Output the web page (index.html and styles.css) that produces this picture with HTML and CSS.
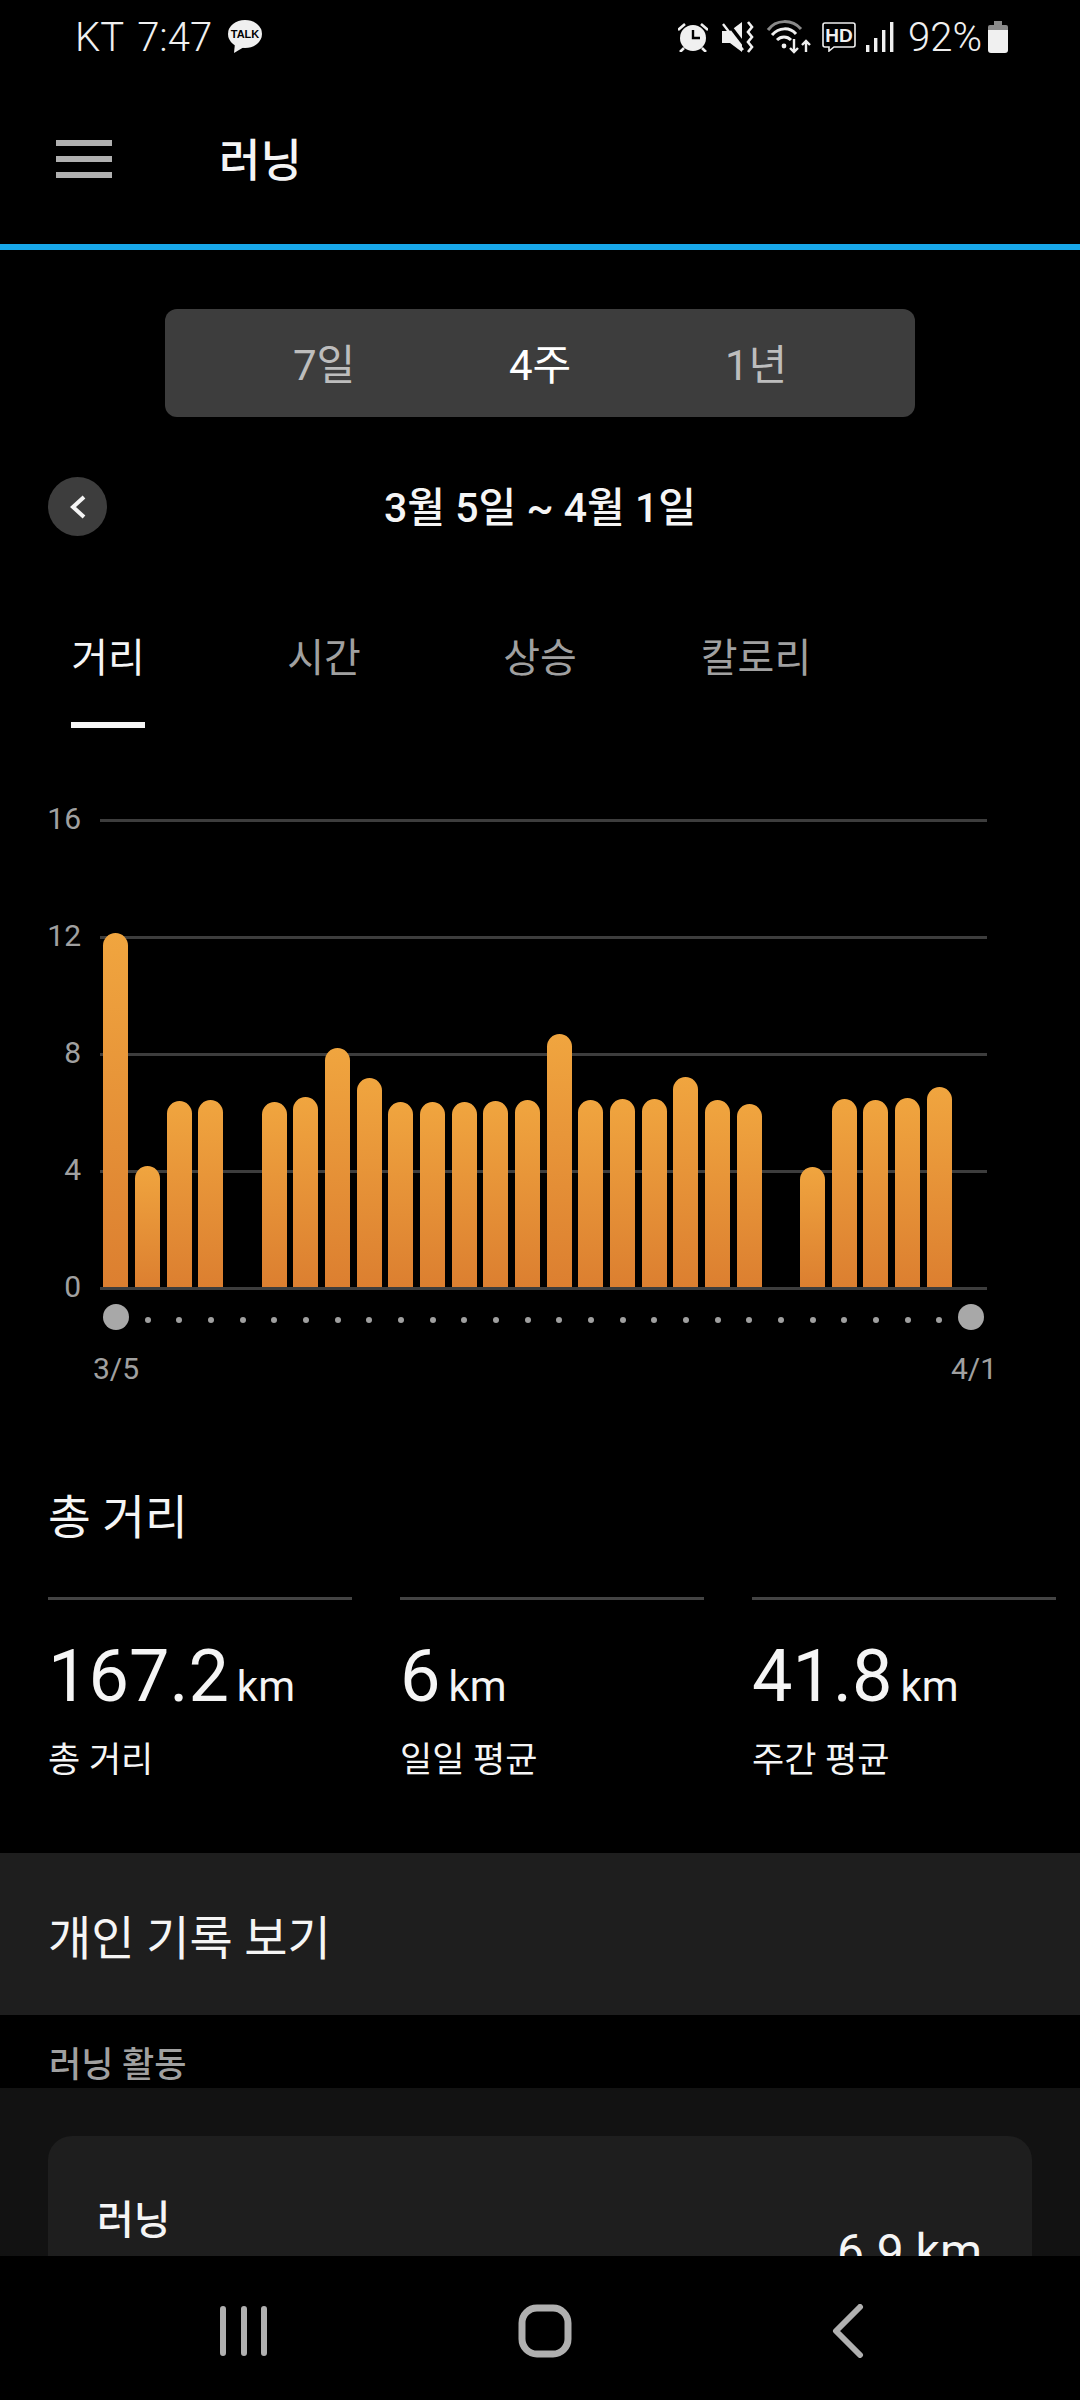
FILE: index.html
```html
<!DOCTYPE html>
<html lang="ko">
<head>
    <meta charset="utf-8">
    <title>러닝</title>
    <link rel="stylesheet" href="styles.css">
</head>
<body>
    <div class="status">
        <div class="status-left">
            <span class="carrier">KT</span>
            <span>7:47</span>
            <svg class="talk" width="34" height="34" viewBox="0 0 34 34">
                <ellipse cx="17" cy="14" rx="17" ry="14" fill="#f0f0f0"/>
                <path d="M7 23 L6 33 L16 27 Z" fill="#f0f0f0"/>
                <text x="17" y="18" text-anchor="middle" class="talk-text">TALK</text>
            </svg>
        </div>
        <div class="status-right">
            <svg width="30" height="30" viewBox="0 0 30 30">
                <circle cx="15" cy="16" r="13" fill="#f0f0f0"/>
                <path d="M15 8 V16 H22" fill="none" stroke="#000" stroke-width="2.4"/>
                <path d="M0 8 L7 2 M30 8 L23 2" stroke="#f0f0f0" stroke-width="2.6"/>
                <path d="M2 30 L6 26 M28 30 L24 26" stroke="#f0f0f0" stroke-width="2.6"/>
            </svg>
            <svg class="ml-14" width="32" height="32" viewBox="0 0 32 32">
                <path d="M0 10 H8 L20 1 V31 L8 22 H0 Z" fill="#f0f0f0"/>
                <path d="M4 0 L24 26" stroke="#000" stroke-width="3.6"/>
                <path d="M1 3 L21 29" stroke="#f0f0f0" stroke-width="2.4"/>
                <path d="M26 1 L30 6 L26 11 L30 16 L26 21 L30 26 L26 31" fill="none" stroke="#f0f0f0" stroke-width="2.6"/>
            </svg>
            <svg class="ml-12" width="46" height="34" viewBox="0 0 46 34">
                <path d="M2 10 C10 -1 26 -1 35 9" fill="none" stroke="#8a8a8a" stroke-width="3"/>
                <path d="M6 15 C13 7 24 7 30 14" fill="none" stroke="#f0f0f0" stroke-width="3"/>
                <path d="M11 20 C15 16 21 16 25 20" fill="none" stroke="#f0f0f0" stroke-width="3"/>
                <circle cx="18" cy="26" r="2.4" fill="#f0f0f0"/>
                <path d="M28 19 V32 M24 28 L28 32 L32 28" fill="none" stroke="#f0f0f0" stroke-width="2.4"/>
                <path d="M40 32 V21 M36 25 L40 21 L44 25" fill="none" stroke="#f0f0f0" stroke-width="2.4"/>
            </svg>
            <svg class="ml-10" width="34" height="30" viewBox="0 0 34 30">
                <path d="M3 1 H31 Q33 1 33 3 V23 Q33 25 31 25 H12 L7 29 V25 H3 Q1 25 1 23 V3 Q1 1 3 1 Z" fill="none" stroke="#f0f0f0" stroke-width="1.6"/>
                <text x="17" y="20" text-anchor="middle" class="hd-text">HD</text>
            </svg>
            <svg class="ml-10" width="28" height="30" viewBox="0 0 28 30">
                <rect x="0" y="23" width="3.4" height="7" fill="#f0f0f0"/>
                <rect x="8" y="16" width="3.4" height="14" fill="#f0f0f0"/>
                <rect x="16" y="8" width="3.4" height="22" fill="#f0f0f0"/>
                <rect x="24" y="0" width="3.4" height="30" fill="#f0f0f0"/>
            </svg>
            <span class="battery-text">92%</span>
            <svg class="ml-6" width="20" height="32" viewBox="0 0 20 32">
                <path d="M6 0 H14 V4 H6 Z" fill="#8a8a8a"/>
                <path d="M2 4 H18 Q20 4 20 6 V9 H0 V6 Q0 4 2 4 Z" fill="#8a8a8a"/>
                <path d="M0 9 H20 V29 Q20 32 17 32 H3 Q0 32 0 29 Z" fill="#f0f0f0"/>
            </svg>
        </div>
    </div>

    <div class="header">
        <div class="burger"><i></i><i></i><i></i></div>
        <h1>러닝</h1>
    </div>

    <main class="content">
        <div class="segment">
            <span>7일</span>
            <span class="on">4주</span>
            <span>1년</span>
        </div>

        <div class="date-row">
            <div class="round-btn">
                <svg width="18" height="24" viewBox="0 0 18 24">
                    <path d="M15 2 L4 12 L15 22" fill="none" stroke="#f5f5f5" stroke-width="4"/>
                </svg>
            </div>
            <div class="date">3월 5일 ~ 4월 1일</div>
        </div>

        <div class="tabs">
            <div class="tab on"><span>거리</span><i></i></div>
            <div class="tab"><span>시간</span><i></i></div>
            <div class="tab"><span>상승</span><i></i></div>
            <div class="tab"><span>칼로리</span><i></i></div>
        </div>

        <div class="chart">
            <div class="grid-row"><span>16</span><i></i></div>
            <div class="grid-row"><span>12</span><i></i></div>
            <div class="grid-row"><span>8</span><i></i></div>
            <div class="grid-row"><span>4</span><i></i></div>
            <div class="grid-row"><span>0</span><i></i></div>
            <div class="bars">
                <div class="slot"><b style="height:354px"></b></div>
                <div class="slot"><b style="height:121px"></b></div>
                <div class="slot"><b style="height:186px"></b></div>
                <div class="slot"><b style="height:187px"></b></div>
                <div class="slot"></div>
                <div class="slot"><b style="height:185px"></b></div>
                <div class="slot"><b style="height:190px"></b></div>
                <div class="slot"><b style="height:239px"></b></div>
                <div class="slot"><b style="height:209px"></b></div>
                <div class="slot"><b style="height:185px"></b></div>
                <div class="slot"><b style="height:185px"></b></div>
                <div class="slot"><b style="height:185px"></b></div>
                <div class="slot"><b style="height:186px"></b></div>
                <div class="slot"><b style="height:187px"></b></div>
                <div class="slot"><b style="height:253px"></b></div>
                <div class="slot"><b style="height:187px"></b></div>
                <div class="slot"><b style="height:188px"></b></div>
                <div class="slot"><b style="height:188px"></b></div>
                <div class="slot"><b style="height:210px"></b></div>
                <div class="slot"><b style="height:187px"></b></div>
                <div class="slot"><b style="height:183px"></b></div>
                <div class="slot"></div>
                <div class="slot"><b style="height:120px"></b></div>
                <div class="slot"><b style="height:188px"></b></div>
                <div class="slot"><b style="height:187px"></b></div>
                <div class="slot"><b style="height:189px"></b></div>
                <div class="slot"><b style="height:200px"></b></div>
                <div class="slot"></div>
            </div>
        </div>

        <div class="dots">
            <div class="slot"><i class="big"></i></div>
            <div class="slot"><i></i></div><div class="slot"><i></i></div><div class="slot"><i></i></div>
            <div class="slot"><i></i></div><div class="slot"><i></i></div><div class="slot"><i></i></div>
            <div class="slot"><i></i></div><div class="slot"><i></i></div><div class="slot"><i></i></div>
            <div class="slot"><i></i></div><div class="slot"><i></i></div><div class="slot"><i></i></div>
            <div class="slot"><i></i></div><div class="slot"><i></i></div><div class="slot"><i></i></div>
            <div class="slot"><i></i></div><div class="slot"><i></i></div><div class="slot"><i></i></div>
            <div class="slot"><i></i></div><div class="slot"><i></i></div><div class="slot"><i></i></div>
            <div class="slot"><i></i></div><div class="slot"><i></i></div><div class="slot"><i></i></div>
            <div class="slot"><i></i></div><div class="slot"><i></i></div>
            <div class="slot"><i class="big"></i></div>
        </div>

        <div class="range">
            <span>3/5</span>
            <span>4/1</span>
        </div>

        <h2 class="total-title">총 거리</h2>

        <div class="stats">
            <div class="stat">
                <div class="num">167.2<small>km</small></div>
                <div class="cap">총 거리</div>
            </div>
            <div class="stat">
                <div class="num">6<small>km</small></div>
                <div class="cap">일일 평균</div>
            </div>
            <div class="stat">
                <div class="num">41.8<small>km</small></div>
                <div class="cap">주간 평균</div>
            </div>
        </div>

        <div class="records">개인 기록 보기</div>

        <div class="section-label">러닝 활동</div>

        <div class="activities">
            <div class="card">
                <div class="card-title">러닝</div>
                <div class="card-value">6.9 km</div>
            </div>
        </div>
    </main>

    <div class="navbar">
        <div class="nav-cell nav-recent">
            <svg width="48" height="50" viewBox="0 0 48 50">
                <path d="M3 3 V47 M24 3 V47 M44 3 V47" stroke="#b0b0b0" stroke-width="6" stroke-linecap="round"/>
            </svg>
        </div>
        <div class="nav-cell">
            <svg width="54" height="54" viewBox="0 0 54 54">
                <rect x="4" y="4" width="46" height="46" rx="15" fill="none" stroke="#b0b0b0" stroke-width="7"/>
            </svg>
        </div>
        <div class="nav-cell">
            <svg width="32" height="54" viewBox="0 0 32 54">
                <path d="M28 3 L4 27 L28 51" fill="none" stroke="#b0b0b0" stroke-width="6" stroke-linecap="round" stroke-linejoin="round"/>
            </svg>
        </div>
    </div>
</body>
</html>
```

FILE: styles.css
```css
* {
    box-sizing: border-box;
}
html, body {
    margin: 0;
    padding: 0;
}
body {
    width: 1080px;
    height: 2400px;
    display: flex;
    flex-direction: column;
    overflow: hidden;
    background: #000;
    color: #f5f5f5;
    font-family: Roboto, "Noto Sans CJK KR", sans-serif;
}
h1, h2 {
    margin: 0;
    font-weight: 400;
}
i, b {
    display: block;
}

/* status bar */
.status {
    height: 80px;
    flex: none;
    display: flex;
    justify-content: space-between;
    align-items: center;
    padding: 0 72px 6px 75px;
    font-size: 40px;
    font-weight: 300;
    color: #f0f0f0;
}
.status-left, .status-right {
    display: flex;
    align-items: center;
}
.carrier {
    margin-right: 13px;
}
.talk {
    margin-left: 16px;
}
.talk-text {
    font: 700 11px "Liberation Sans", sans-serif;
    fill: #000;
}
.hd-text {
    font: 700 19px "Liberation Sans", sans-serif;
    fill: #f0f0f0;
}
.battery-text {
    margin-left: 14px;
}
.ml-6 { margin-left: 6px; }
.ml-10 { margin-left: 10px; }
.ml-12 { margin-left: 12px; }
.ml-14 { margin-left: 14px; }

/* app header */
.header {
    height: 170px;
    flex: none;
    display: flex;
    align-items: center;
    padding: 0 0 0 56px;
    border-bottom: 6px solid #18a8ea;
}
.burger {
    width: 56px;
    display: flex;
    flex-direction: column;
    gap: 10px;
    margin-top: -6px;
}
.burger i {
    height: 6px;
    background: #b0b0b0;
}
.header h1 {
    margin: 0 0 0 107px;
    font-size: 45px;
    font-weight: 500;
    line-height: 60px;
}

.content {
    flex: 1;
    min-height: 0;
    overflow: hidden;
}

/* 7일 / 4주 / 1년 */
.segment {
    width: 750px;
    height: 108px;
    margin: 59px auto 0;
    padding-bottom: 4px;
    display: flex;
    justify-content: center;
    align-items: center;
    background: #3d3d3d;
    border-radius: 12px;
    font-size: 42px;
    color: #bdbdbd;
}
.segment span {
    width: 216px;
    text-align: center;
}
.segment .on {
    color: #fff;
}

/* date */
.date-row {
    display: grid;
    grid-template-columns: 1fr auto 1fr;
    align-items: center;
    margin-top: 60px;
    padding-left: 48px;
}
.round-btn {
    width: 59px;
    height: 59px;
    border-radius: 50%;
    background: #3d3d3d;
    display: flex;
    align-items: center;
    justify-content: center;
}
.date {
    font-size: 41px;
    font-weight: 500;
    color: #f5f5f5;
    margin: -5px 0 0 -48px;
}

/* tabs */
.tabs {
    display: flex;
    margin-top: 64px;
}
.tab {
    width: 216px;
    display: flex;
    flex-direction: column;
    align-items: center;
    font-size: 40px;
    color: #a0a0a0;
}
.tab span {
    line-height: 114px;
    padding-top: 2px;
    height: 114px;
}
.tab i {
    width: 74px;
    height: 6px;
    margin-top: 8px;
}
.tab.on {
    color: #f5f5f5;
}
.tab.on i {
    background: #f5f5f5;
}

/* chart */
.chart {
    position: relative;
    margin-top: 91px;
    display: flex;
    flex-direction: column;
    gap: 114px;
}
.grid-row {
    height: 3px;
    display: flex;
    align-items: center;
    font-size: 30px;
    color: #a0a0a0;
}
.grid-row span {
    width: 81px;
    margin-right: 19px;
    padding-bottom: 5px;
    text-align: right;
    flex: none;
}
.grid-row i {
    width: 887px;
    height: 3px;
    background: #3d3d3d;
}
.bars {
    position: absolute;
    left: 100px;
    bottom: 3px;
    width: 887px;
    display: flex;
    align-items: flex-end;
}
.slot {
    flex: 1;
    display: flex;
    justify-content: center;
}
.bars b {
    width: 25px;
    border-radius: 13px 13px 0 0;
    background: linear-gradient(#f0a53f, #dc7f30);
}
.dots {
    width: 887px;
    height: 26px;
    margin: 14px 0 0 100px;
    display: flex;
    align-items: center;
}
.dots i {
    width: 6px;
    height: 6px;
    margin-top: 6px;
    border-radius: 50%;
    background: #a0a0a0;
}
.dots i.big {
    width: 26px;
    height: 26px;
    margin-top: 0;
    background: #a8a8a8;
}
.range {
    display: flex;
    justify-content: space-between;
    margin: 19px 74px 0 84px;
    font-size: 30px;
    line-height: 40px;
    color: #a0a0a0;
}
.range span {
    width: 64px;
    text-align: center;
}

/* totals */
.total-title {
    margin: 99px 0 0 48px;
    font-size: 46.5px;
    line-height: 60px;
    color: #f5f5f5;
}
.stats {
    display: grid;
    grid-template-columns: repeat(3, 304px);
    gap: 48px;
    margin: 49px 0 0 48px;
}
.stat {
    border-top: 3px solid #444;
}
.num {
    margin-top: 32px;
    font-size: 72px;
    line-height: 90px;
}
.num small {
    margin-left: 8px;
    font-size: 42px;
}
.cap {
    margin-top: 4px;
    font-size: 35px;
    line-height: 50px;
}

.records {
    height: 162px;
    margin-top: 67px;
    padding-left: 48px;
    display: flex;
    align-items: center;
    background: #1e1e1e;
    font-size: 47px;
}
.section-label {
    height: 73px;
    padding: 28px 0 0 49px;
    font-size: 35px;
    font-weight: 500;
    line-height: 46px;
    color: #a0a0a0;
}
.activities {
    padding: 48px;
    background: #121212;
}
.card {
    height: 320px;
    display: flex;
    justify-content: space-between;
    align-items: flex-start;
    padding: 60px 50px 0 49px;
    border-radius: 24px;
    background: #1e1e1e;
}
.card-title {
    font-size: 40px;
    font-weight: 500;
    line-height: 50px;
}
.card-value {
    margin-top: 31px;
    font-size: 48px;
    line-height: 50px;
}

/* bottom nav */
.navbar {
    height: 144px;
    flex: none;
    display: flex;
    justify-content: center;
    align-items: center;
    padding: 6px 0 0 10px;
    background: #000;
}
.nav-cell {
    width: 303px;
    display: flex;
    justify-content: center;
}
.nav-recent {
    padding-left: 3px;
}
```
